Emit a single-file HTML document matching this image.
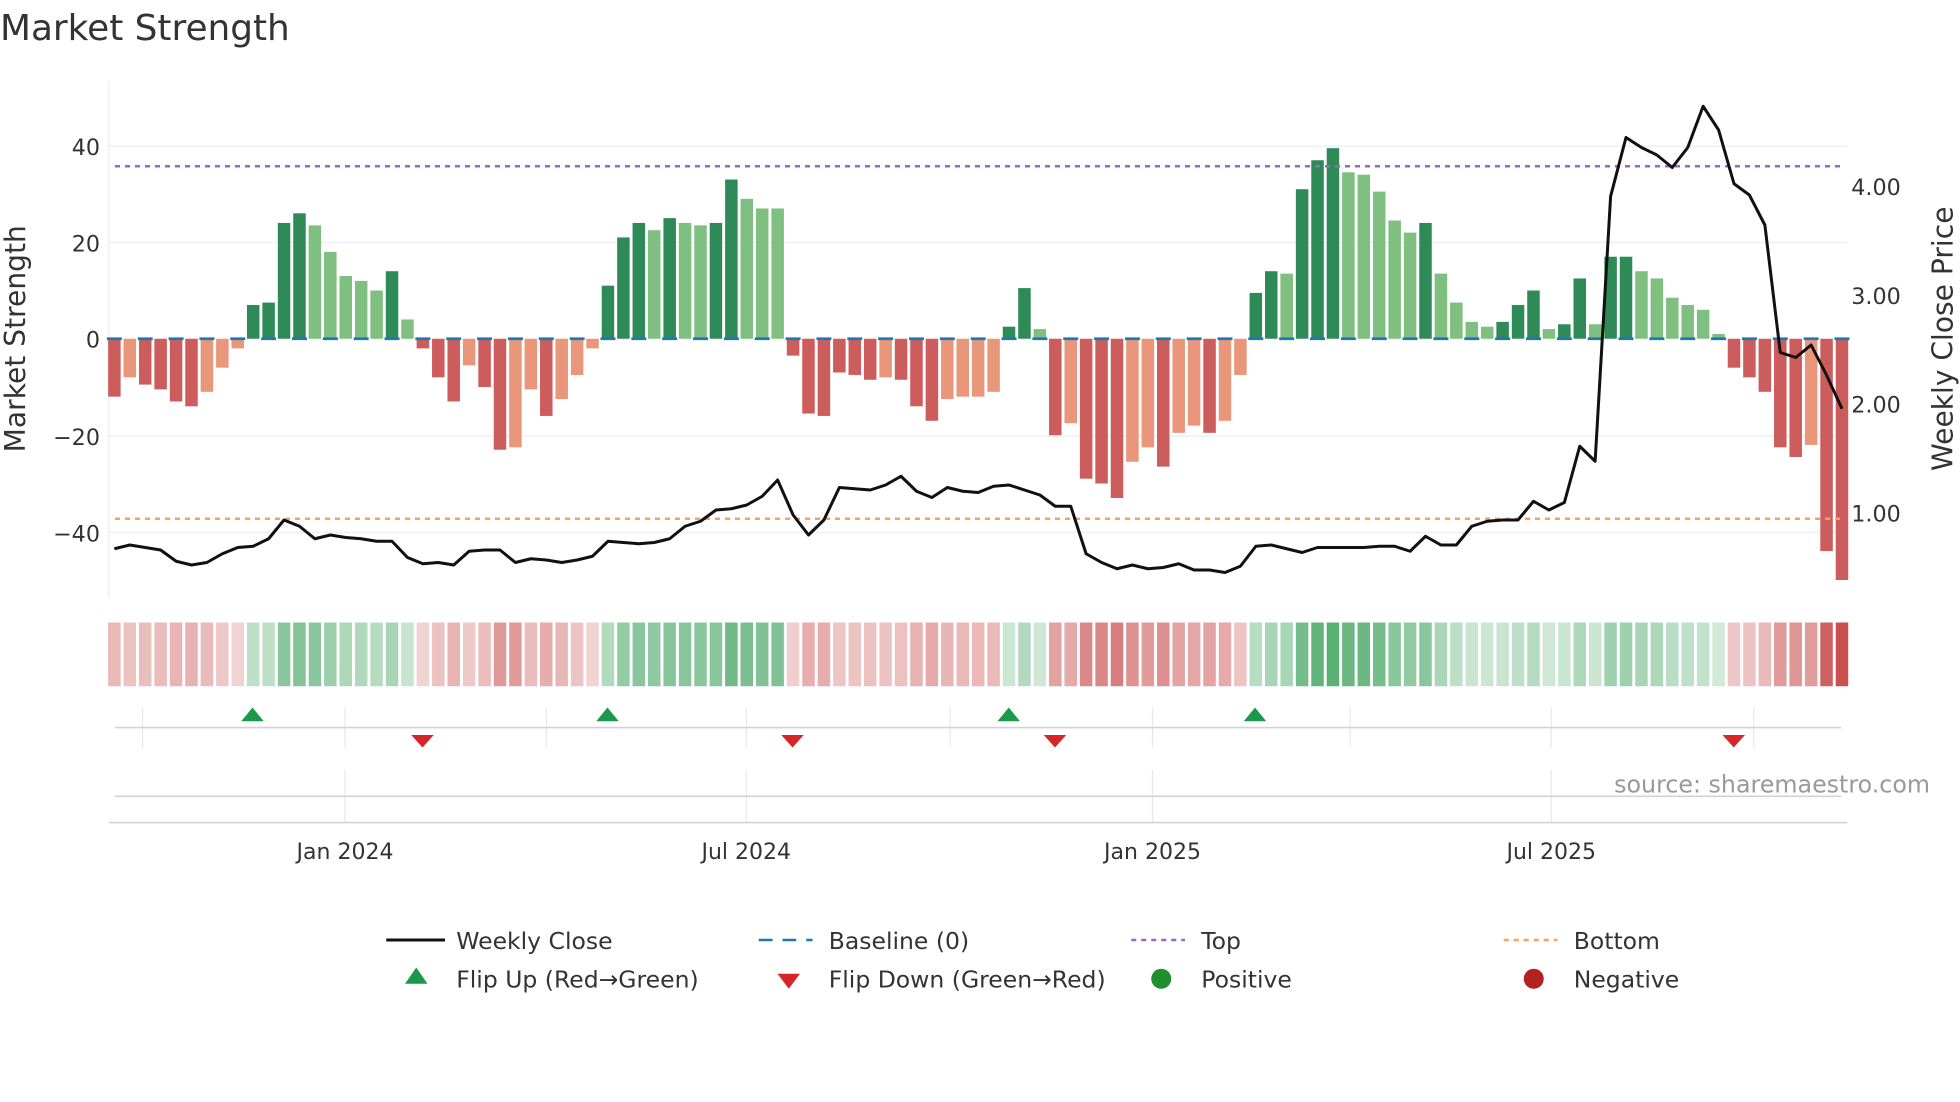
<!DOCTYPE html>
<html><head><meta charset="utf-8"><style>
html,body{margin:0;padding:0;background:#fff;}
svg{display:block;font-family:"DejaVu Sans","Liberation Sans",sans-serif;}
</style></head><body>
<svg id="s" width="1960" height="1102" viewBox="0 0 1568 881.6" xmlns="http://www.w3.org/2000/svg">
<rect width="1568" height="882" fill="#fff"/>
<text x="0" y="32" font-size="28.7" fill="#333">Market Strength</text>
<g stroke="#eef0f3" stroke-width="1.2">
<line x1="87" y1="117" x2="1478" y2="117"/><line x1="87" y1="194" x2="1478" y2="194"/>
<line x1="87" y1="349" x2="1478" y2="349"/><line x1="87" y1="426" x2="1478" y2="426"/>
<line x1="87" y1="65" x2="87" y2="478"/>
</g>
<g id="bars"></g>
<g id="base"></g>
<line x1="92" y1="133" x2="1473" y2="133" stroke="#9467d4" stroke-width="2" stroke-dasharray="4,4"/>
<line x1="92" y1="415" x2="1473" y2="415" stroke="#f4a460" stroke-width="2" stroke-dasharray="4,4"/>
<polyline id="price" fill="none" stroke="#111" stroke-width="2.4" stroke-linejoin="round"/>
<g font-size="17.8" fill="#333" text-anchor="end">
<text x="80" y="124">40</text><text x="80" y="201">20</text><text x="80" y="278">0</text>
<text x="80" y="356">−20</text><text x="80" y="433">−40</text>
</g>
<g font-size="17.8" fill="#333">
<text x="1481" y="156">4.00</text><text x="1481" y="243">3.00</text><text x="1481" y="330">2.00</text><text x="1481" y="417">1.00</text>
</g>
<text transform="translate(20,271) rotate(-90)" font-size="22.5" fill="#333" text-anchor="middle">Market Strength</text>
<text transform="translate(1562,271) rotate(-90)" font-size="22.5" fill="#333" text-anchor="middle">Weekly Close Price</text>
<g id="strip"></g>
<g stroke="#e6e8ec" stroke-width="1">
<line x1="114" y1="566" x2="114" y2="598"/><line x1="276" y1="566" x2="276" y2="598"/><line x1="437" y1="566" x2="437" y2="598"/>
<line x1="597" y1="566" x2="597" y2="598"/><line x1="760" y1="566" x2="760" y2="598"/><line x1="922" y1="566" x2="922" y2="598"/>
<line x1="1080" y1="566" x2="1080" y2="598"/><line x1="1241" y1="566" x2="1241" y2="598"/><line x1="1403" y1="566" x2="1403" y2="598"/>
<line x1="276" y1="616" x2="276" y2="658"/><line x1="597" y1="616" x2="597" y2="658"/><line x1="922" y1="616" x2="922" y2="658"/><line x1="1241" y1="616" x2="1241" y2="658"/>
</g>
<line x1="92" y1="582" x2="1473" y2="582" stroke="#d0d3d8" stroke-width="1.3"/>
<line x1="92" y1="637" x2="1473" y2="637" stroke="#d0d3d8" stroke-width="1.3"/>
<line x1="87" y1="658" x2="1478" y2="658" stroke="#d0d3d8" stroke-width="1.3"/>
<g id="flips"></g>
<text x="1544" y="634" font-size="19" fill="#999" text-anchor="end">source: sharemaestro.com</text>
<g font-size="17.6" fill="#333" text-anchor="middle">
<text x="276" y="687">Jan 2024</text><text x="597" y="687">Jul 2024</text><text x="922" y="687">Jan 2025</text><text x="1241" y="687">Jul 2025</text>
</g>
<g font-size="18.8" fill="#333">
<line x1="309" y1="752" x2="356" y2="752" stroke="#111" stroke-width="2.4"/>
<text x="365" y="759">Weekly Close</text>
<line x1="607" y1="752" x2="650" y2="752" stroke="#1f77b4" stroke-width="2" stroke-dasharray="11,8"/>
<text x="663" y="759">Baseline (0)</text>
<line x1="905" y1="752" x2="948" y2="752" stroke="#9467d4" stroke-width="2" stroke-dasharray="4,4"/>
<text x="961" y="759">Top</text>
<line x1="1203" y1="752" x2="1246" y2="752" stroke="#f4a460" stroke-width="2" stroke-dasharray="4,4"/>
<text x="1259" y="759">Bottom</text>
<polygon points="333,774 342,787 324,787" fill="#1a9a48"/>
<text x="365" y="790">Flip Up (Red→Green)</text>
<polygon points="622,779 640,779 631,791" fill="#d62728"/>
<text x="663" y="790">Flip Down (Green→Red)</text>
<circle cx="929" cy="783" r="8" fill="#1f8f2f"/>
<text x="961" y="790">Positive</text>
<circle cx="1227" cy="783" r="8" fill="#b22222"/>
<text x="1259" y="790">Negative</text>
</g>
</svg>
<script>
var V=[-12,-8,-9.5,-10.5,-13,-14,-11,-6,-2,7,7.5,24,26,23.5,18,13,12,10,14,4,-2,-8,-13,-5.5,-10,-23,-22.5,-10.5,-16,-12.5,-7.5,-2,11,21,24,22.5,25,24,23.5,24,33,29,27,27,-3.5,-15.5,-16,-7,-7.5,-8.5,-8,-8.5,-14,-17,-12.5,-12,-12,-11,2.5,10.5,2,-20,-17.5,-29,-30,-33,-25.5,-22.5,-26.5,-19.5,-18,-19.5,-17,-7.5,9.5,14,13.5,31,37,39.5,34.5,34,30.5,24.5,22,24,13.5,7.5,3.5,2.5,3.5,7,10,2,3,12.5,3,17,17,14,12.5,8.5,7,6,1,-6,-8,-11,-22.5,-24.5,-22,-44,-50];
var DK=[1,0,1,1,1,1,0,0,0,1,1,1,1,0,0,0,0,0,1,0,1,1,1,0,1,1,0,0,1,0,0,0,1,1,1,0,1,0,0,1,1,0,0,0,1,1,1,1,1,1,0,1,1,1,0,0,0,0,1,1,0,1,0,1,1,1,0,0,1,0,0,1,0,0,1,1,0,1,1,1,0,0,0,0,0,1,0,0,0,0,1,1,1,0,1,1,0,1,1,0,0,0,0,0,0,1,1,1,1,1,0,1,1];
var P=[439,436,438,440,449,452,450,443,438,437,431,416,421,431,428,430,431,433,433,446,451,450,452,441,440,440,450,447,448,450,448,445,433,434,435,434,431,421,417,408,407,404,397,384,412,428,416,390,391,392,388,381,393,398,390,393,394,389,388,392,396,405,405,443,450,455,452,455,454,451,456,456,458,453,437,436,439,442,438,438,438,438,437,437,441,429,436,436,421,417,416,416,401,408,402,357,369,157,110,118,124,134,118,85,104,147,156,180,282,286,276,300,327];
var NS="http://www.w3.org/2000/svg";
function el(p,t,a){var e=document.createElementNS(NS,t);for(var k in a)e.setAttribute(k,a[k]);p.appendChild(e);return e;}
var bars=document.getElementById('bars'),strip=document.getElementById('strip'),base=document.getElementById('base');
var pts=[];
for(var i=0;i<V.length;i++){
 var x=91.5+12.34*i,v=V[i],y0=271,h=Math.abs(v)*3.86;
 var c=v>=0?(DK[i]?'#2e8b57':'#7fbf7f'):(DK[i]?'#cd5c5c':'#e9967a');
 el(bars,'rect',{x:x-5,y:v>=0?y0-h:y0,width:10,height:h,fill:c});
 var a=Math.min(1,0.22+0.78*Math.abs(v)/50);
 el(strip,'rect',{x:x-5,y:498,width:10,height:51,fill:v>=0?'#3aa05a':'#c9504f','fill-opacity':a});
 if(i%2==0) el(base,'line',{x1:x-6,y1:271,x2:x+6,y2:271,stroke:'#1f77b4','stroke-width':2.2});
 pts.push(x.toFixed(1)+','+P[i]);
}
document.getElementById('price').setAttribute('points',pts.join(' '));
var f=document.getElementById('flips');
[202,486,807,1004].forEach(function(x){el(f,'polygon',{points:x+',566 '+(x+9)+',577 '+(x-9)+',577',fill:'#1a9a48'});});
[338,634,844,1387].forEach(function(x){el(f,'polygon',{points:(x-9)+',588 '+(x+9)+',588 '+x+',598',fill:'#d62728'});});
</script>
</body></html>
